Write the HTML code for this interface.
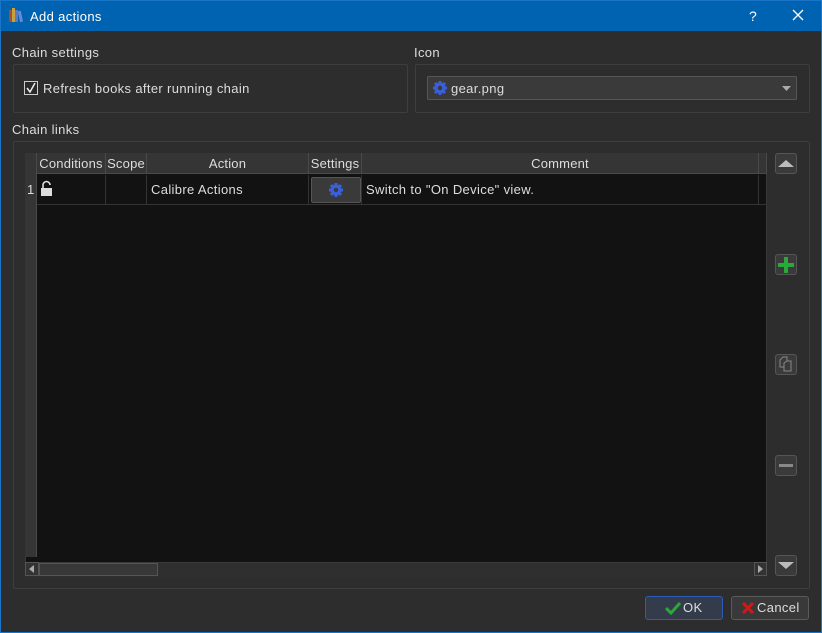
<!DOCTYPE html>
<html><head><style>
*{box-sizing:border-box;margin:0;padding:0}
body{width:822px;height:633px;background:#2d2d2d;font-family:"Liberation Sans",sans-serif;font-size:13px;letter-spacing:0.35px;color:#e0e0e0;position:relative;overflow:hidden}
.abs{position:absolute}
.win{position:absolute;left:0;top:0;width:822px;height:633px;border:1px solid #1a74c8}
.title{position:absolute;left:0;top:0;width:822px;height:31px;background:#0063b1;color:#fff}
.grp{position:absolute;border:1px solid #3e3e3e;border-radius:2px}
.lbl{position:absolute;font-size:13px;color:#ddd}
.hdr{position:absolute;top:153px;height:21px;background:#353535;border-right:1px solid #4a4a4a;border-bottom:1px solid #4a4a4a;text-align:center;line-height:21px;color:#ddd;letter-spacing:0.2px}
.sbtn{position:absolute;left:775px;width:22px;height:21px;background:#3a3a3a;border:1px solid #555;border-radius:3px}
.btn{position:absolute;top:596px;height:24px;border-radius:3px;background:#393939;border:1px solid #5a5a5a;line-height:22px;color:#ddd}
</style></head><body>
<div class="title">
 <svg class="abs" style="left:9px;top:8px" width="16" height="15"><rect x="0" y="2" width="3" height="12" fill="#a0522d"/><rect x="3" y="0" width="3" height="14" fill="#c8a040"/><rect x="6" y="2" width="3" height="12" fill="#5a7ab8"/><rect x="10" y="3" width="3" height="11" fill="#6a8ad8" transform="rotate(-12 11 9)"/></svg>
 <div class="abs" style="left:30px;top:9px;color:#fff">Add actions</div>
 <div class="abs" style="left:749px;top:8px;color:#fff;font-size:14px">?</div>
 <svg class="abs" style="left:792px;top:9px" width="12" height="12"><path d="M1 1L11 11M11 1L1 11" stroke="#fff" stroke-width="1.3"/></svg>
</div>
<div class="lbl" style="left:12px;top:45px">Chain settings</div>
<div class="grp" style="left:13px;top:64px;width:395px;height:49px"></div>
<div class="abs" style="left:24px;top:81px;width:14px;height:14px;border:1px solid #ccc;background:#2a2a2a"></div>
<svg class="abs" style="left:26px;top:83px" width="10" height="10"><path d="M1 5L4 9L9 0" stroke="#eee" stroke-width="1.5" fill="none"/></svg>
<div class="lbl" style="left:43px;top:81px">Refresh books after running chain</div>
<div class="lbl" style="left:414px;top:45px">Icon</div>
<div class="grp" style="left:415px;top:64px;width:395px;height:49px"></div>
<div class="abs" style="left:427px;top:76px;width:370px;height:24px;background:#3a3a3a;border:1px solid #555;border-radius:2px"></div>
<svg class="abs" style="left:432px;top:80px" width="16" height="16" viewBox="0 0 16 16"><g fill="#3b5fd8"><circle cx="8" cy="8" r="5.5"/><g stroke="#3b5fd8" stroke-width="3"><path d="M8 1V15M1 8H15M3 3L13 13M13 3L3 13"/></g></g><circle cx="8" cy="8" r="2.2" fill="#3a3a3a"/></svg>
<div class="lbl" style="left:451px;top:81px">gear.png</div>
<svg class="abs" style="left:782px;top:86px" width="9" height="5"><path d="M0 0H9L4.5 5Z" fill="#aaa"/></svg>
<div class="lbl" style="left:12px;top:122px">Chain links</div>
<div class="grp" style="left:13px;top:141px;width:797px;height:448px"></div>
<div class="abs" style="left:25px;top:153px;width:742px;height:424px;background:#121212;border:1px solid #3a3a3a"></div>
<div class="abs" style="left:25px;top:153px;width:12px;height:404px;background:#353535;border-right:1px solid #4a4a4a"></div>
<div class="hdr" style="left:37px;width:69px">Conditions</div>
<div class="hdr" style="left:106px;width:41px">Scope</div>
<div class="hdr" style="left:147px;width:162px">Action</div>
<div class="hdr" style="left:309px;width:53px">Settings</div>
<div class="hdr" style="left:362px;width:397px">Comment</div>
<div class="hdr" style="left:759px;width:8px"></div>
<div class="abs" style="left:37px;top:175px;width:730px;height:30px;border-bottom:1px solid #333"></div>
<div class="abs" style="left:105px;top:175px;width:1px;height:30px;background:#333"></div>
<div class="abs" style="left:146px;top:175px;width:1px;height:30px;background:#333"></div>
<div class="abs" style="left:308px;top:175px;width:1px;height:30px;background:#333"></div>
<div class="abs" style="left:361px;top:175px;width:1px;height:30px;background:#333"></div>
<div class="abs" style="left:758px;top:175px;width:1px;height:30px;background:#333"></div>
<div class="lbl" style="left:27px;top:182px">1</div>
<svg class="abs" style="left:40px;top:180px" width="14" height="17"><path d="M3 8V5a3.5 3.5 0 0 1 7 0" stroke="#ddd" stroke-width="1.6" fill="none"/><rect x="1" y="8" width="11" height="8" fill="#ddd"/></svg>
<div class="lbl" style="left:151px;top:182px">Calibre Actions</div>
<div class="abs" style="left:311px;top:177px;width:50px;height:26px;background:#3a3a3a;border:1px solid #555;border-radius:2px"></div>
<svg class="abs" style="left:328px;top:182px" width="16" height="16" viewBox="0 0 16 16"><g fill="#3b5fd8"><circle cx="8" cy="8" r="5.5"/><g stroke="#3b5fd8" stroke-width="3"><path d="M8 1V15M1 8H15M3 3L13 13M13 3L3 13"/></g></g><circle cx="8" cy="8" r="2.2" fill="#3a3a3a"/></svg>
<div class="lbl" style="left:366px;top:182px">Switch to "On Device" view.</div>
<div class="abs" style="left:25px;top:562px;width:742px;height:15px;background:#2f2f2f;border-top:1px solid #3a3a3a"></div>
<div class="abs" style="left:25px;top:562px;width:14px;height:14px;border:1px solid #555;background:#333"></div>
<svg class="abs" style="left:29px;top:565px" width="5" height="8"><path d="M5 0V8L0 4Z" fill="#aaa"/></svg>
<div class="abs" style="left:39px;top:563px;width:119px;height:13px;background:#383838;border:1px solid #555"></div>
<div class="abs" style="left:754px;top:562px;width:13px;height:14px;border:1px solid #555;background:#333"></div>
<svg class="abs" style="left:758px;top:565px" width="5" height="8"><path d="M0 0V8L5 4Z" fill="#aaa"/></svg>
<div class="sbtn" style="top:153px"><svg width="20" height="19"><path d="M2 13H18L10 6Z" fill="#bbb"/></svg></div>
<div class="sbtn" style="top:254px"><svg width="20" height="19"><path d="M8 2H12V8H18V12H12V18H8V12H2V8H8Z" fill="#2aa83a"/></svg></div>
<div class="sbtn" style="top:354px"><svg width="20" height="19"><path d="M4 12V5L7 2H11V12Z" fill="none" stroke="#888"/><path d="M8 16V8L11 6H15V16Z" fill="#3a3a3a" stroke="#888"/></svg></div>
<div class="sbtn" style="top:455px"><svg width="20" height="19"><rect x="3" y="8" width="14" height="3" fill="#888"/></svg></div>
<div class="sbtn" style="top:555px"><svg width="20" height="19"><path d="M2 6H18L10 13Z" fill="#bbb"/></svg></div>
<div class="btn" style="left:645px;width:78px;border-color:#2a5cb8;background:#343c4c"><svg class="abs" style="left:19px;top:4px" width="16" height="14"><path d="M1 7L6 12L15 2" stroke="#2aa83a" stroke-width="3" fill="none"/></svg><span class="abs" style="left:37px;top:0">OK</span></div>
<div class="btn" style="left:731px;width:78px"><svg class="abs" style="left:10px;top:5px" width="12" height="12"><path d="M1 1L11 11M11 1L1 11" stroke="#d01818" stroke-width="3"/></svg><span class="abs" style="left:25px;top:0">Cancel</span></div>
<div class="win"></div>
</body></html>
